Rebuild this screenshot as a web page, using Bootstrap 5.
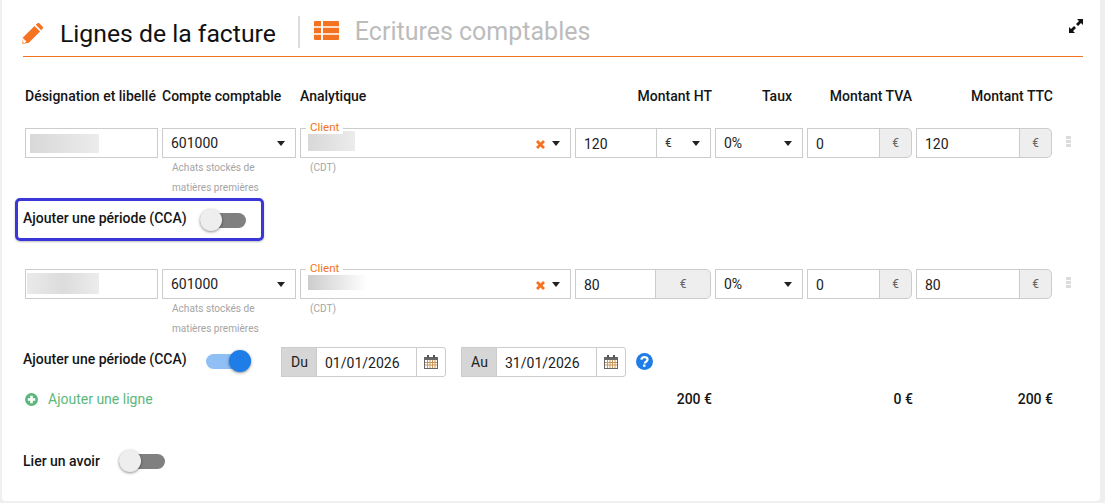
<!DOCTYPE html>
<html lang="fr">
<head>
<meta charset="utf-8">
<title>Lignes de la facture</title>
<link rel="stylesheet" href="https://cdn.jsdelivr.net/npm/bootstrap@5.3.0/dist/css/bootstrap.min.css">
<style>
html,body{height:503px;overflow:hidden}
body{background:#efefef;font-family:Roboto,sans-serif;font-size:14px;color:#212121}
.sheet{margin-left:2px;width:1098px;height:501px;background:#fff;border-radius:0 0 4px 4px;padding:0 17px 0 21px}
.head{height:57px;border-bottom:1px solid #f47321;padding-top:16px;align-items:flex-start}
.pen{margin-top:7px;margin-left:-1px;flex:none}
.ttl{font-size:24.75px;line-height:32px;color:#111;margin-left:17px;margin-top:2px}
.ttl2{font-size:25px;line-height:32px;color:#bcbcbc;margin-left:16px}
.vsep{width:2px;height:32px;background:#ddd;margin:0 14px 0 22px}
.lst{margin-top:5px;flex:none}
.xpand{margin-top:3px;flex:none}
.cols{display:grid;grid-template-columns:133px 134px 271px 136px 88px 105px 136px;column-gap:4px;margin-left:2px}
.lbl{font-weight:500;font-size:14px;line-height:20px;color:#151515;white-space:nowrap}
.lblrow{margin-top:29px;margin-bottom:22px}
.shift1{margin-right:-1px}
.taux{padding-left:47px}
.box{height:30px;border:1px solid #ccc;background:#fff;display:flex;align-items:center;position:relative;padding:0 8px}
.input-group.grp{height:30px;flex-wrap:nowrap}
.grp .form-control{height:30px;min-height:30px;border:1px solid #ccc;border-radius:0;padding:1px 8px 0;font-size:14px;color:#212121;box-shadow:none;min-width:0}
.grp .input-group-text{height:30px;border:1px solid #ccc;background:#eee;color:#666;font-size:12px;padding:0;justify-content:center;border-radius:0}
.grp .rnd{border-radius:0 5px 5px 0}
.w-eur{width:33px}
.w-eur2{width:56px}
.grp .eursel{background:#fff;color:#333;padding:0 10px 0 8px;justify-content:flex-start;display:flex;width:55px}
.caret{width:0;height:0;border-left:4px solid transparent;border-right:4px solid transparent;border-top:5px solid #222;display:block;margin-left:auto;margin-right:2px}
.blur1{height:19px;background:linear-gradient(90deg,#d8d8d8,#ececec);flex:none}
.blur-a{width:69px;margin-left:-4px}
.blur-b{width:72px;height:21px;margin-left:-7px;margin-top:-1px;background:linear-gradient(90deg,#eaeaea,#dcdcdc 50%,#ececec)}
.blur-c{width:47px;height:20px;margin-left:-1px;margin-top:-4px}
.blur-d{width:59px;height:15px;margin-left:-1px;margin-top:-4px;background:linear-gradient(90deg,#ccc,#fff)}
.legendtxt{position:absolute;left:5px;top:-9px;background:#fff;color:#f47321;font-size:11.5px;line-height:14px;padding:0 4px}
.xmark{margin-left:auto;margin-right:7px;margin-top:3px;flex:none}
.caret-a{margin:0 2px 0 0}
.subt{font-size:10.1px;line-height:20px;color:#a5a5a5;padding-left:10px;white-space:nowrap}
.tgl{display:block;position:relative;width:46px;height:22px;flex:none}
.tgl::before{content:"";position:absolute;left:0;right:0;top:4px;height:15px;border-radius:8px;background:#808080}
.tgl::after{content:"";position:absolute;left:0;top:0;width:22px;height:22px;border-radius:50%;background:#eee;box-shadow:0 1px 3px rgba(0,0,0,.45)}
.tgl.on{width:45px}
.tgl.on::before{background:#90bff5}
.tgl.on::after{left:23px;background:#1e7de6}
.hilite{margin:0 0 0 -8px;width:249px;height:43px;border:3px solid #3b36d8;border-radius:5px;padding-left:5px;box-shadow:0 1px 2px rgba(0,0,0,.25);gap:13px}
.hilite .lbl{margin-top:-3px}
.blk2{margin-top:28px}
.addon-g{background:#d6d6d6!important;color:#222!important;font-size:14px!important;width:36px;padding-left:1px!important}
.addon-w{background:#fff!important;width:30px;border-radius:0 3px 3px 0!important}
.dategrp{width:165px}
.dategrp.d1{margin-left:30px}
.dategrp.d2{margin-left:15px}
.ccarow{margin-top:8px}
.ccalbl{width:183px;margin-top:2px}
.tgl.lift{margin-top:3px}
.qmark{margin:6px 0 0 10px;flex:none}
.totrow{margin-top:12px}
.addline{color:#5cb87a;font-size:14px;line-height:20px;grid-column:1 / span 3;gap:10px}
.tot{font-weight:500;font-size:14px;line-height:20px;text-align:right;color:#151515;margin-right:-1px}
.lier{margin-top:41px;gap:19px}
.ttcwrap{width:160px}
.ttcgrp{width:136px;flex:none}
.dots{width:5px;display:flex;flex-direction:column;gap:1px;margin:8px 0 0 14px}
.dots i{display:block;height:3px;background:#dcdcdc}
</style>
</head>
<body>
<div class="sheet">
  <div class="head d-flex">
    <svg class="pen" width="21" height="21" viewBox="0 0 21 21"><path fill="#f47321" d="M0 21l1.200-6.800L12.500 2.900 18.100 8.500 6.800 19.800z"/><path fill="#f47321" d="M13.800 1.800l1.300-1.200c.8-.8 1.800-.8 2.500-.1l2.900 2.900c.7.700.7 1.700-.1 2.500l-1.200 1.300z"/><path fill="#fff" d="M1.200 15.600l1 .2.300 1.500 1.500.3.200 1-1.300 1.300-2.600.5.500-2.600z"/><path fill="#f9b98e" d="M.8 18.200l1.800 1.800-2.300.5z"/></svg>
    <div class="ttl">Lignes de la facture</div>
    <div class="vsep"></div>
    <svg class="lst" width="25" height="19" viewBox="0 0 25 19"><path fill="#f47321" d="M0 1a1 1 0 0 1 1-1h6v5.300H0zM9 0h15a1 1 0 0 1 1 1v4.300H9zM0 6.800h7v5.400H0zM9 6.800h16v5.400H9zM0 13.700h7V19H1a1 1 0 0 1-1-1zM9 13.700h16V18a1 1 0 0 1-1 1H9z"/></svg>
    <div class="ttl2">Ecritures comptables</div>
    <svg class="xpand ms-auto" width="14" height="14" viewBox="0 0 14 14"><path fill="#111" d="M8 0h6v6l-2-2-3 3-2-2 3-3zM0 8l2 2 3-3 2 2-3 3 2 2H0z"/></svg>
  </div>

  <div class="cols lblrow">
    <div class="lbl">Désignation et libellé</div>
    <div class="lbl">Compte comptable</div>
    <div class="lbl">Analytique</div>
    <div class="lbl text-end shift1">Montant HT</div>
    <div class="lbl taux">Taux</div>
    <div class="lbl text-end">Montant TVA</div>
    <div class="lbl text-end shift1">Montant TTC</div>
  </div>

  <div class="cols">
    <div class="box"><div class="blur1 blur-a"></div></div>
    <div class="box">601000<span class="caret"></span></div>
    <div class="box"><span class="legendtxt">Client</span><div class="blur1 blur-c"></div><svg class="xmark" width="9" height="9" viewBox="0 0 9 9"><path fill="#f47321" d="M2 0L4.500 2.500 7 0 9 2 6.500 4.500 9 7 7 9 4.500 6.500 2 9 0 7 2.500 4.500 0 2z"/></svg><span class="caret caret-a"></span></div>
    <div class="input-group grp"><input class="form-control" value="120"><span class="input-group-text eursel">€<span class="caret m-0 ms-auto"></span></span></div>
    <div class="box">0%<span class="caret"></span></div>
    <div class="input-group grp"><input class="form-control" value="0"><span class="input-group-text w-eur rnd">€</span></div>
    <div class="d-flex ttcwrap"><div class="input-group grp ttcgrp"><input class="form-control" value="120"><span class="input-group-text w-eur rnd">€</span></div><div class="dots"><i></i><i></i><i></i></div></div>
  </div>
  <div class="cols">
    <div></div>
    <div class="subt">Achats stockés de<br>matières premières</div>
    <div class="subt">(CDT)</div>
  </div>

  <div class="hilite d-flex align-items-center">
    <span class="lbl">Ajouter une période (CCA)</span>
    <span class="tgl"></span>
  </div>

  <div class="cols blk2">
    <div class="box"><div class="blur1 blur-b"></div></div>
    <div class="box">601000<span class="caret"></span></div>
    <div class="box"><span class="legendtxt">Client</span><div class="blur1 blur-d"></div><svg class="xmark" width="9" height="9" viewBox="0 0 9 9"><path fill="#f47321" d="M2 0L4.500 2.500 7 0 9 2 6.500 4.500 9 7 7 9 4.500 6.500 2 9 0 7 2.500 4.500 0 2z"/></svg><span class="caret caret-a"></span></div>
    <div class="input-group grp"><input class="form-control" value="80"><span class="input-group-text w-eur2 rnd">€</span></div>
    <div class="box">0%<span class="caret"></span></div>
    <div class="input-group grp"><input class="form-control" value="0"><span class="input-group-text w-eur rnd">€</span></div>
    <div class="d-flex ttcwrap"><div class="input-group grp ttcgrp"><input class="form-control" value="80"><span class="input-group-text w-eur rnd">€</span></div><div class="dots"><i></i><i></i><i></i></div></div>
  </div>
  <div class="cols">
    <div></div>
    <div class="subt">Achats stockés de<br>matières premières</div>
    <div class="subt">(CDT)</div>
  </div>

  <div class="d-flex align-items-start ccarow">
    <span class="lbl ccalbl">Ajouter une période (CCA)</span>
    <span class="tgl on lift"></span>
    <div class="input-group grp dategrp d1">
      <span class="input-group-text addon-g">Du</span>
      <input class="form-control" value="01/01/2026">
      <span class="input-group-text addon-w"><svg width="14" height="14" viewBox="0 0 14 14"><path fill="#666" d="M0 2h14v12H0zM1 5v8h12V5z"/><path fill="none" stroke="#c9975b" d="M1 7.500h12M1 10h12M3.500 5v8M6 5v8M8.500 5v8M11 5v8"/><path fill="#555" d="M3 0h2v3H3zM9 0h2v3H9z"/></svg></span>
    </div>
    <div class="input-group grp dategrp d2">
      <span class="input-group-text addon-g">Au</span>
      <input class="form-control" value="31/01/2026">
      <span class="input-group-text addon-w"><svg width="14" height="14" viewBox="0 0 14 14"><path fill="#666" d="M0 2h14v12H0zM1 5v8h12V5z"/><path fill="none" stroke="#c9975b" d="M1 7.500h12M1 10h12M3.500 5v8M6 5v8M8.500 5v8M11 5v8"/><path fill="#555" d="M3 0h2v3H3zM9 0h2v3H9z"/></svg></span>
    </div>
    <svg class="qmark" width="17" height="17" viewBox="0 0 17 17"><circle cx="8.500" cy="8.500" r="8.500" fill="#1e7de6"/><path fill="none" stroke="#fff" stroke-width="2.300" d="M5.400 6.600c.2-1.700 1.400-2.500 3.100-2.500 1.800 0 3 1 3 2.400 0 1.300-.8 1.800-1.700 2.400-.7.500-1 .8-1 1.700"/><rect x="7" y="11.500" width="2.500" height="2.300" fill="#fff"/></svg>
  </div>

  <div class="cols totrow">
    <div class="d-flex align-items-center addline"><svg width="13" height="13" viewBox="0 0 13 13"><circle cx="6.500" cy="6.500" r="6.500" fill="#5cb87a"/><path fill="#fff" d="M5.200 2.800h2.600v2.400h2.400v2.600H7.800v2.400H5.200V7.800H2.800V5.200h2.400z"/></svg>Ajouter une ligne</div>
    <div class="tot">200 €</div>
    <div></div>
    <div class="tot">0 €</div>
    <div class="tot">200 €</div>
  </div>

  <div class="d-flex align-items-center lier">
    <span class="lbl">Lier un avoir</span>
    <span class="tgl"></span>
  </div>
</div>
<script src="https://cdn.jsdelivr.net/npm/bootstrap@5.3.0/dist/js/bootstrap.bundle.min.js"></script>
</body>
</html>
